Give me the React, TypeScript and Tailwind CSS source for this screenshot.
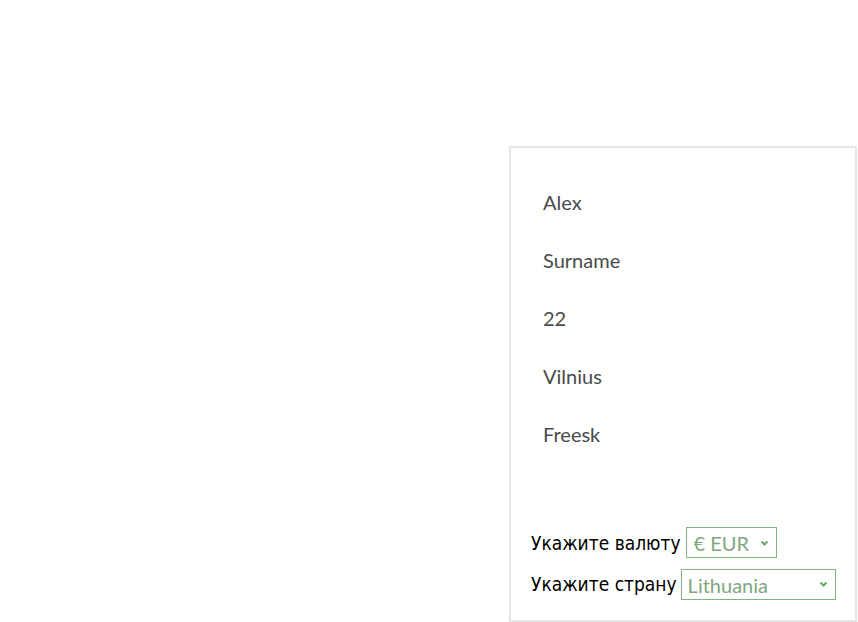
import React from "react";

const people = ["Alex", "Surname", "22", "Vilnius", "Freesk"];

function Chevron() {
  return (
    <svg
      width="9"
      height="7"
      viewBox="0 0 9 7"
      className="pointer-events-none absolute right-[8px] top-1/2 -translate-y-1/2"
    >
      <path d="M1.5 2 L4.5 5 L7.5 2" fill="none" stroke="#6aa86a" strokeWidth="2" />
    </svg>
  );
}

export default function App() {
  return (
    <div className="min-h-[622px] bg-white flex justify-end pt-[146px] pr-px">
      <div className="w-[348px] h-[476px] border-2 border-[#e6e6e6] flex flex-col">
        {/* Info */}
        <div className="pt-[25px] pl-[32px] text-[20px] text-[#4a4a4a] font-['Lato',sans-serif]">
          {people.map((p) => (
            <div key={p} className="h-[58px] flex items-center">
              {p}
            </div>
          ))}
        </div>

        {/* Form */}
        <div className="mt-auto mb-[20px] pl-[20px] text-[19px] text-black font-['DejaVu_Sans_Condensed','DejaVu_Sans',sans-serif] flex flex-col gap-[10px]">
          <label className="flex items-center gap-[5px]">
            <span>Укажите валюту</span>
            <span className="relative inline-block">
              <select className="appearance-none w-[91px] h-[31px] border border-[#7cb87c] pl-[7px] text-[#7fa77f] text-[20px] font-['Lato',sans-serif] bg-white outline-none">
                <option>€ EUR</option>
              </select>
              <Chevron />
            </span>
          </label>
          <label className="flex items-center gap-[4px]">
            <span>Укажите страну</span>
            <span className="relative inline-block">
              <select className="appearance-none w-[155px] h-[31px] border border-[#7cb87c] pl-[6px] text-[#7fa77f] text-[20px] font-['Lato',sans-serif] bg-white outline-none">
                <option>Lithuania</option>
              </select>
              <Chevron />
            </span>
          </label>
        </div>
      </div>
    </div>
  );
}
